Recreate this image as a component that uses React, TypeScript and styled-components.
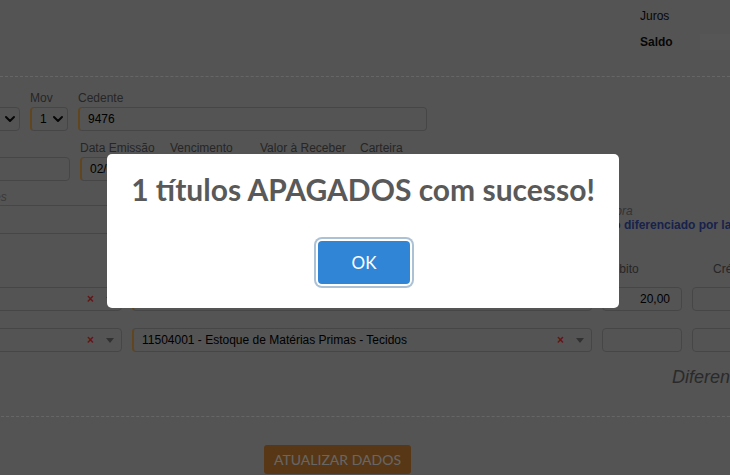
import React from "react";
import styled, { createGlobalStyle } from "styled-components";
import { ChevronDown } from "lucide-react";

const GlobalStyle = createGlobalStyle`
  html, body { margin: 0; padding: 0; }
  body {
    background: #d2d2d2;
    font-family: "Liberation Sans", Arial, sans-serif;
    overflow: hidden;
  }
  * { box-sizing: border-box; }
`;

const ACCENT = "#f0ad4e";
const BORDER = "#b0b0b0";

const Page = styled.div`
  width: 730px;
  height: 475px;
  overflow: hidden;
`;

const Header = styled.header`
  height: 77px;
  padding: 8px 0 0 640px;
  border-bottom: 1px dashed #ffffff;
`;

const Summary = styled.div`
  display: grid;
  grid-template-columns: 60px 30px;
  row-gap: 10px;
`;

const SummaryLabel = styled.span<{ $strong?: boolean }>`
  font-size: 12px;
  line-height: 16px;
  color: #111111;
  font-weight: ${(p) => (p.$strong ? 700 : 400)};
`;

const SummaryValue = styled.span<{ $shaded?: boolean }>`
  height: 16px;
  background: ${(p) => (p.$shaded ? "#d6d6d6" : "transparent")};
`;

const Form = styled.form`
  width: 900px;
  margin-left: -80px;
  padding: 14px 0 0 16px;
`;

const FieldRow = styled.div<{ $top?: number }>`
  display: flex;
  gap: 10px;
  margin-top: ${(p) => p.$top ?? 0}px;
`;

const Field = styled.div<{ $w: number; $gap?: number }>`
  display: flex;
  flex-direction: column;
  gap: ${(p) => p.$gap ?? 2}px;
  width: ${(p) => p.$w}px;
  flex: none;
`;

const Label = styled.label<{ $italic?: boolean }>`
  align-self: flex-start;
  font-size: 12px;
  line-height: 14px;
  height: 14px;
  white-space: nowrap;
  color: ${(p) => (p.$italic ? "#909090" : "#606060")};
  font-style: ${(p) => (p.$italic ? "italic" : "normal")};
`;

const Box = styled.div<{ $accent?: boolean; $h?: number; $right?: boolean }>`
  display: flex;
  align-items: center;
  height: ${(p) => p.$h ?? 24}px;
  border: 1px solid ${BORDER};
  border-left: ${(p) => (p.$accent ? `2px solid ${ACCENT}` : `1px solid ${BORDER}`)};
  border-radius: 4px;
  padding: ${(p) => (p.$right ? "0 11px 0 8px" : "0 7px 0 8px")};
  justify-content: ${(p) => (p.$right ? "flex-end" : "flex-start")};
  font-size: 12px;
  color: #000;
  white-space: nowrap;
  overflow: hidden;
`;

const SelectBox = styled(Box)`
  padding-right: 1px;
`;

const Value = styled.span`
  flex: 1;
  overflow: hidden;
`;

const Chevron = styled(ChevronDown)`
  flex: none;
  color: #111;
`;

const Clear = styled.span`
  flex: none;
  font-size: 12px;
  font-weight: 700;
  color: #ff3030;
  margin-right: 12px;
  line-height: 1;
`;

const Caret = styled.span`
  flex: none;
  width: 0;
  height: 0;
  border-left: 4px solid transparent;
  border-right: 4px solid transparent;
  border-top: 5px solid #7a7a7a;
`;

const SideNote = styled.div`
  display: flex;
  flex-direction: column;
  padding-top: 14px;
  font-size: 12px;
  line-height: 14px;
  white-space: nowrap;
`;

const SideTitle = styled.span`
  font-style: italic;
  color: #808080;
  padding-left: 22px;
`;

const SideLink = styled.span`
  font-weight: 700;
  color: #3a55c0;
`;

const Grid = styled.div<{ $top?: number }>`
  display: grid;
  grid-template-columns: 186px 460px 80px 80px;
  column-gap: 10px;
  margin-top: ${(p) => p.$top ?? 0}px;
`;

const HeadCell = styled.span<{ $indent?: number }>`
  font-size: 12px;
  line-height: 14px;
  height: 14px;
  color: #606060;
  white-space: nowrap;
  padding-left: ${(p) => p.$indent ?? 0}px;
`;

const Difference = styled.div`
  margin-top: 15px;
  padding-left: 736px;
  font-size: 18px;
  line-height: 20px;
  font-style: italic;
  color: #6a6a6a;
  white-space: nowrap;
`;

const Divider = styled.hr`
  margin: 29px 0 0 0;
  border: none;
  border-top: 1px dashed #ffffff;
`;

const Footer = styled.div`
  margin-top: 28px;
  padding-left: 328px;
`;

const UpdateButton = styled.button`
  height: 29px;
  padding: 0 10px;
  border: none;
  border-radius: 3px;
  background: #da8a37;
  color: #ffffff;
  font-family: Lato, "Liberation Sans", sans-serif;
  font-size: 14px;
`;

const Backdrop = styled.div`
  position: fixed;
  inset: 0;
  background: rgba(0, 0, 0, 0.6);
  display: flex;
  align-items: flex-start;
  justify-content: flex-start;
  padding: 154px 0 0 107px;
`;

const Popup = styled.div`
  width: 512px;
  background: #ffffff;
  border-radius: 5px;
  padding: 17px 20px 24px;
  text-align: center;
  font-family: Lato, "Liberation Sans", sans-serif;
`;

const Title = styled.h2`
  margin: 0;
  font-size: 30px;
  line-height: 36px;
  font-weight: 700;
  color: #595959;
  white-space: nowrap;
`;

const Actions = styled.div`
  margin-top: 34px;
  display: flex;
  justify-content: center;
`;

const ConfirmButton = styled.button`
  width: 92px;
  height: 43px;
  border: none;
  border-radius: 4px;
  background: #3085d6;
  color: #ffffff;
  font-family: Lato, "Liberation Sans", sans-serif;
  font-size: 17px;
  box-shadow: 0 0 0 2px #ffffff, 0 0 0 4px rgba(50, 100, 150, 0.4);
  margin-left: 2px;
`;

function Select({ value, accent, clear }: { value?: string; accent?: boolean; clear?: boolean }) {
  return (
    <Box $accent={accent}>
      <Value>{value}</Value>
      {clear && <Clear>×</Clear>}
      <Caret />
    </Box>
  );
}

function NativeSelect({ value, accent }: { value?: string; accent?: boolean }) {
  return (
    <SelectBox $accent={accent}>
      <Value>{value}</Value>
      <Chevron size={16} strokeWidth={3} />
    </SelectBox>
  );
}

export default function App() {
  return (
    <>
      <GlobalStyle />
      <Page>
        <Header>
          <Summary>
            <SummaryLabel>Juros</SummaryLabel>
            <SummaryValue />
            <SummaryLabel $strong>Saldo</SummaryLabel>
            <SummaryValue $shaded />
          </Summary>
        </Header>
        <Form onSubmit={(e) => e.preventDefault()}>
          <FieldRow>
            <Field $w={84}>
              <Label />
              <NativeSelect />
            </Field>
            <Field $w={38}>
              <Label>Mov</Label>
              <NativeSelect accent value="1" />
            </Field>
            <Field $w={349}>
              <Label>Cedente</Label>
              <Box $accent>
                <Value>9476</Value>
              </Box>
            </Field>
          </FieldRow>
          <FieldRow $top={10}>
            <Field $w={134}>
              <Label />
              <Box />
            </Field>
            <Field $w={80}>
              <Label>Data Emissão</Label>
              <Box $accent>
                <Value>02/02/2024</Value>
              </Box>
            </Field>
            <Field $w={80}>
              <Label>Vencimento</Label>
              <Box $accent />
            </Field>
            <Field $w={90}>
              <Label>Valor à Receber</Label>
              <Box $accent />
            </Field>
            <Field $w={80}>
              <Label>Carteira</Label>
              <Box />
            </Field>
          </FieldRow>
          <FieldRow $top={9}>
            <Field $w={638} $gap={1}>
              <Label $italic>Observações</Label>
              <Box $h={29} />
            </Field>
            <SideNote>
              <SideTitle>Obra</SideTitle>
              <SideLink>Rateio diferenciado por lançamento</SideLink>
            </SideNote>
          </FieldRow>
          <Grid $top={28}>
            <HeadCell />
            <HeadCell>Conta Contábil</HeadCell>
            <HeadCell $indent={2}>Débito</HeadCell>
            <HeadCell $indent={21}>Crédito</HeadCell>
          </Grid>
          <Grid $top={11}>
            <Select clear />
            <Select accent clear value="11101001 - Caixa Geral" />
            <Box $right>20,00</Box>
            <Box />
          </Grid>
          <Grid $top={17}>
            <Select clear />
            <Select accent clear value="11504001 - Estoque de Matérias Primas - Tecidos" />
            <Box $right />
            <Box />
          </Grid>
          <Difference>Diferença: 0,00</Difference>
          <Divider />
          <Footer>
            <UpdateButton type="button">ATUALIZAR DADOS</UpdateButton>
          </Footer>
        </Form>
      </Page>
      <Backdrop>
        <Popup role="dialog">
          <Title>1 títulos APAGADOS com sucesso!</Title>
          <Actions>
            <ConfirmButton type="button">OK</ConfirmButton>
          </Actions>
        </Popup>
      </Backdrop>
    </>
  );
}
